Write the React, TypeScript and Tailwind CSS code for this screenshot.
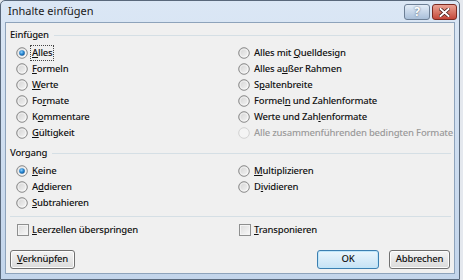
import React from "react";

const font = { fontFamily: '"Segoe UI", "Noto Sans", "Open Sans", sans-serif' };

function Mn({ text, u }: { text: string; u: number }) {
  return (
    <>
      {text.slice(0, u)}
      <span className="underline underline-offset-[1px]">{text[u]}</span>
      {text.slice(u + 1)}
    </>
  );
}

function Radio({ checked, disabled }: { checked?: boolean; disabled?: boolean }) {
  return (
    <svg width="12" height="12" viewBox="0 0 12 12" className="shrink-0">
      <defs>
        <linearGradient id="rg" x1="0" y1="0" x2="1" y2="1">
          <stop offset="0" stopColor="#d0d0d0" />
          <stop offset="1" stopColor="#f8f8f8" />
        </linearGradient>
        <radialGradient id="dot" cx="0.4" cy="0.35" r="0.7">
          <stop offset="0" stopColor="#8fd0ff" />
          <stop offset="0.5" stopColor="#2a8ad4" />
          <stop offset="1" stopColor="#0e4f8f" />
        </radialGradient>
      </defs>
      <circle cx="6" cy="6" r="5.3" fill={disabled ? "#f4f4f4" : "url(#rg)"} stroke={disabled ? "#d2d2d2" : "#8a8a8a"} strokeWidth="1" />
      {!disabled && <circle cx="6" cy="6" r="3.9" fill="none" stroke="#ffffff" strokeOpacity="0.6" strokeWidth="0.8" />}
      {checked && <circle cx="6" cy="6" r="2.8" fill="url(#dot)" />}
    </svg>
  );
}

function Check() {
  return (
    <span className="w-[12px] h-[12px] shrink-0 border border-[#8e8f8f] bg-gradient-to-br from-[#dcdcdc] to-[#f9f9f9] shadow-[inset_0_0_0_1px_#f4f4f4]" />
  );
}

function Row({ children, checked, disabled, focus }: { children: React.ReactNode; checked?: boolean; disabled?: boolean; focus?: boolean }) {
  return (
    <div className={`h-[16px] flex items-center gap-[3px] whitespace-nowrap ${disabled ? "text-[#9a9a9a]" : "text-[#111]"}`}>
      <Radio checked={checked} disabled={disabled} />
      <span className={`px-[1px] leading-[14px] ${focus ? "outline outline-1 outline-dotted outline-[#444]" : ""}`}>{children}</span>
    </div>
  );
}

function GroupLabel({ text }: { text: string }) {
  return (
    <div className="h-[16px] flex items-center ml-[4px] mr-[3px] text-[#111]">
      <span>{text}</span>
      <div className="flex-1 h-px bg-[#d5dfe5] ml-[5px]" />
    </div>
  );
}

function Btn({ children, primary, w }: { children: React.ReactNode; primary?: boolean; w: string }) {
  return (
    <div
      className={`${w} h-[19px] rounded-[3px] border flex items-center justify-center whitespace-nowrap text-[#111] ${
        primary
          ? "border-[#3c7fb1] bg-gradient-to-b from-[#eaf6fd] to-[#c6e2f5] shadow-[inset_0_0_0_1px_#bfe6fa]"
          : "border-[#707070] bg-gradient-to-b from-[#f4f4f4] to-[#dadada] shadow-[inset_0_0_0_1px_#fcfcfc]"
      }`}
    >
      {children}
    </div>
  );
}

export default function App() {
  return (
    <div className="w-[463px] h-[280px] bg-[#e4e8ee] overflow-hidden text-[9.5px] font-medium tracking-[-0.2px]" style={font}>
      <div className="w-[460px] h-[280px] border border-[#59687b] rounded-t-[5px] bg-gradient-to-b from-[#dbe7f5] to-[#c3d5eb] flex flex-col px-[4px] pb-[5px]">
        <div className="h-[21px] flex items-center justify-between shrink-0">
          <span className="ml-[3px] text-[#1a1a1a] text-[11px] font-normal tracking-[0px]">Inhalte einfügen</span>
          <div className="flex gap-[2px] mt-[1px] mr-[-2px]">
            <div className="w-[26px] h-[16px] rounded-[3px] border border-[#6d7f95] bg-gradient-to-b from-[#e4edf8] to-[#a9bfd9] flex items-center justify-center text-white text-[12px] font-bold leading-none [text-shadow:0_0_2px_#3d4f66]">
              ?
            </div>
            <div className="w-[25px] h-[16px] rounded-[3px] border border-[#7a2a21] bg-gradient-to-b from-[#e9a294] to-[#c4473a] flex items-center justify-center">
              <svg width="11" height="9" viewBox="0 0 11 9">
                <path d="M1.5 1 L9.5 8 M9.5 1 L1.5 8" stroke="#3d1410" strokeWidth="3.4" strokeLinecap="square" />
                <path d="M1.5 1 L9.5 8 M9.5 1 L1.5 8" stroke="#ffffff" strokeWidth="2" strokeLinecap="square" />
              </svg>
            </div>
          </div>
        </div>
        <div className="flex-1 border border-[#8ea3bb] bg-[#f0f0f0] flex flex-col">
          <div className="mt-[4px]">
            <GroupLabel text="Einfügen" />
          </div>
          <div className="mt-[2px] grid grid-cols-[222px_1fr] pl-[10px]">
            <div className="flex flex-col">
              <Row checked focus><Mn text="Alles" u={0} /></Row>
              <Row><Mn text="Formeln" u={0} /></Row>
              <Row><Mn text="Werte" u={0} /></Row>
              <Row><Mn text="Formate" u={2} /></Row>
              <Row><Mn text="Kommentare" u={1} /></Row>
              <Row><Mn text="Gültigkeit" u={0} /></Row>
            </div>
            <div className="flex flex-col">
              <Row><Mn text="Alles mit Quelldesign" u={10} /></Row>
              <Row><Mn text="Alles außer Rahmen" u={7} /></Row>
              <Row><Mn text="Spaltenbreite" u={1} /></Row>
              <Row><Mn text="Formeln und Zahlenformate" u={6} /></Row>
              <Row><Mn text="Werte und Zahlenformate" u={13} /></Row>
              <Row disabled>Alle zusammenführenden bedingten Formate</Row>
            </div>
          </div>
          <div className="mt-[4px]">
            <GroupLabel text="Vorgang" />
          </div>
          <div className="mt-[2px] grid grid-cols-[222px_1fr] pl-[10px]">
            <div className="flex flex-col">
              <Row checked><Mn text="Keine" u={0} /></Row>
              <Row><Mn text="Addieren" u={1} /></Row>
              <Row><Mn text="Subtrahieren" u={0} /></Row>
            </div>
            <div className="flex flex-col">
              <Row><Mn text="Multiplizieren" u={0} /></Row>
              <Row><Mn text="Dividieren" u={1} /></Row>
            </div>
          </div>
          <div className="mt-[5px] ml-[4px] mr-[3px] h-px bg-[#d5dfe5]" />
          <div className="mt-[5px] grid grid-cols-[222px_1fr] pl-[11px] text-[#111]">
            <div className="h-[16px] flex items-center gap-[3px]">
              <Check />
              <span><Mn text="Leerzellen überspringen" u={0} /></span>
            </div>
            <div className="h-[16px] flex items-center gap-[3px]">
              <Check />
              <span><Mn text="Transponieren" u={0} /></span>
            </div>
          </div>
          <div className="mt-[12px] flex items-center px-[4px]">
            <Btn w="w-[65px]"><Mn text="Verknüpfen" u={0} /></Btn>
            <div className="flex-1" />
            <Btn w="w-[62px]" primary>OK</Btn>
            <div className="w-[10px]" />
            <Btn w="w-[61px]">Abbrechen</Btn>
          </div>
        </div>
      </div>
    </div>
  );
}
